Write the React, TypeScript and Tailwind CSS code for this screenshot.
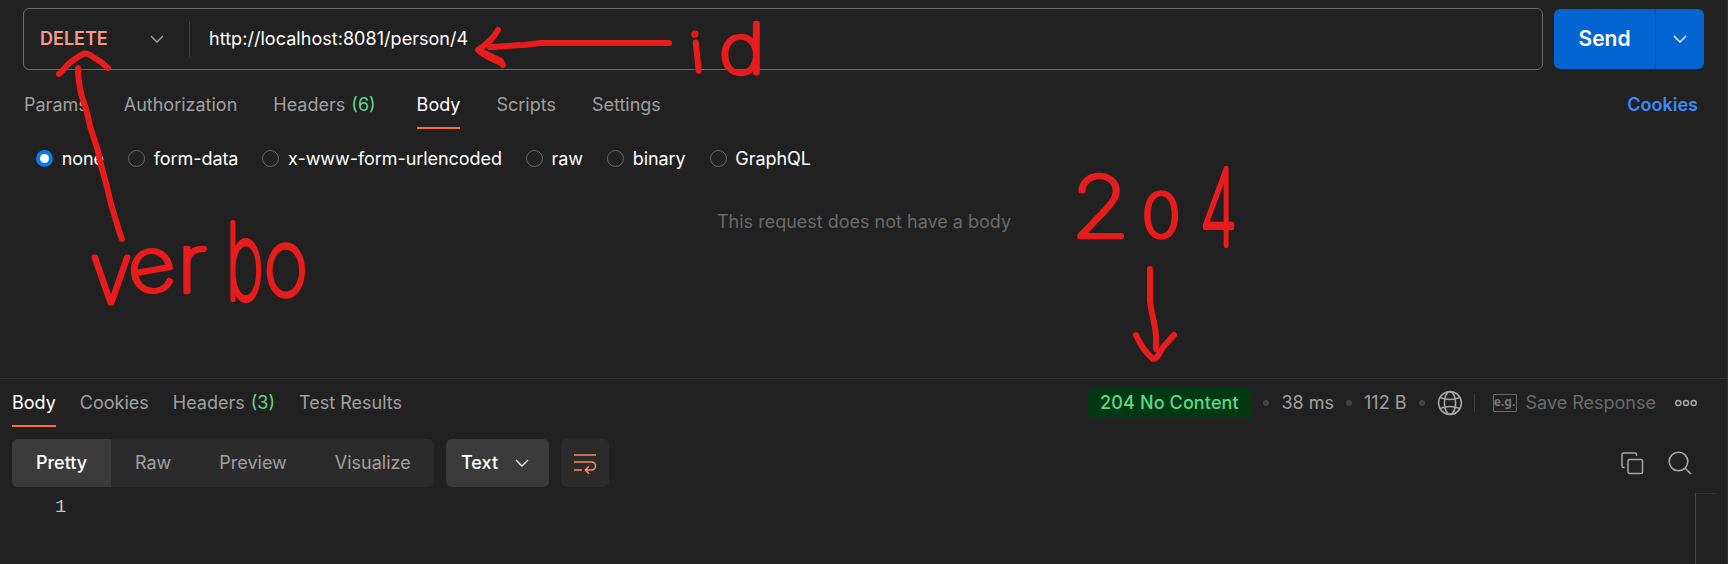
import type { ReactNode } from 'react';

const Chevron = ({ className }: { className: string }) => (
  <svg width="14" height="9" viewBox="0 0 14 9" fill="none" stroke="currentColor" strokeWidth="1.4" className={className}>
    <path d="M1 1l6 6 6-6" />
  </svg>
);

const Tab = ({ active, children }: { active?: boolean; children: ReactNode }) => (
  <div className={active ? 'h-full border-b-2 border-[#ff6c37] text-white' : 'h-full text-[#a0a0a0]'}>{children}</div>
);

const Radio = ({ label, checked }: { label: string; checked?: boolean }) => (
  <label className="flex items-center gap-[8.7px]">
    {checked ? (
      <span className="flex size-[17px] items-center justify-center rounded-full bg-[#097bed]">
        <span className="size-[9px] rounded-full bg-white" />
      </span>
    ) : (
      <span className="size-[17px] rounded-full border border-[#6b6b6b]" />
    )}
    <span className="pt-px tracking-[-0.06px] text-white">{label}</span>
  </label>
);

const Dot = () => <span className="size-1.5 rounded-full bg-[#424242]" />;

type Mark = { ch: string; x: number; y: number; size: number; sx: number; rot?: number };

const marks: Mark[][] = [
  [
    { ch: 'v', x: 90, y: 303, size: 84, sx: 0.92 },
    { ch: 'e', x: 132, y: 295, size: 74, sx: 1.12, rot: -10 },
    { ch: 'r', x: 177, y: 292, size: 80, sx: 1.15 },
    { ch: 'b', x: 226, y: 299, size: 104, sx: 0.62 },
    { ch: 'o', x: 264, y: 295, size: 92, sx: 0.82 },
  ],
  [
    { ch: 'i', x: 693, y: 72, size: 54, sx: 1, rot: -6 },
    { ch: 'd', x: 719, y: 73, size: 68, sx: 1.16 },
  ],
  [
    { ch: '2', x: 1071, y: 237, size: 84, sx: 1.13 },
    { ch: '0', x: 1142, y: 237, size: 60, sx: 1.08 },
    { ch: '4', x: 1200, y: 245, size: 104, sx: 0.6 },
  ],
];

const Annotations = () => (
  <svg
    width="1728"
    height="564"
    viewBox="0 0 1728 564"
    className="pointer-events-none absolute left-0 top-0"
    fill="none"
    stroke="#e81c1c"
    strokeWidth="6"
    strokeLinecap="round"
    strokeLinejoin="round"
  >
    <path d="M59 74C64 70 67 64 72 61L81 55Q85 52 90 55L101 62L108 68" />
    <path d="M78 68C78 78 79 86 82 97C86 107 88 116 90 126L98 151C100 164 105 178 108 191C111 207 116 219 119 231L122 239" />
    <path d="M498 30C494 38 488 43 478 50L501 61L503 65M478 50Q484 56 501 63M490 47C502 47 512 45 524 45L540 43H669" />
    <path d="M1150 269V300C1151 314 1155 322 1156 336V349M1136 335C1140 344 1146 353 1153 359C1158 359 1160 351 1164 346L1174 335" />
    {marks.map((word, i) => (
      <g key={i} fill="#e81c1c" strokeWidth="4.8" className="font-[Inter,sans-serif] font-thin">
        {word.map((m) => (
          <text
            key={m.ch}
            fontSize={m.size}
            vectorEffect="non-scaling-stroke"
            transform={`translate(${m.x} ${m.y}) rotate(${m.rot ?? 0}) scale(${m.sx} 1)`}
          >
            {m.ch}
          </text>
        ))}
      </g>
    ))}
  </svg>
);

export default function App() {
  return (
    <div className="relative flex h-[564px] w-[1728px] flex-col overflow-hidden border-r border-[#2e2e2e] bg-[#212121] font-[Inter,sans-serif] text-[18px] leading-6">
      <div className="ml-[23px] mt-2 flex h-[62px] shrink-0 items-center">
        <div className="flex h-[62px] w-[1520px] items-center rounded-md border border-[#6b6b6b]">
          <span className="ml-4 w-[110px] font-semibold text-[#f79a8e]">DELETE</span>
          <Chevron className="text-[#a6a6a6]" />
          <span className="ml-[25px] h-9 w-px bg-[#3d3d3d]" />
          <span className="ml-[19px] tracking-[0.04px] text-white">http://localhost:8081/person/4</span>
        </div>
        <div className="ml-[11px] flex h-[60px] w-[150px] items-center overflow-hidden rounded-md bg-[#0265d2] text-white">
          <span className="w-[101px] text-center text-[21px] font-semibold">Send</span>
          <span className="h-full w-px bg-[#0150a8]" />
          <Chevron className="ml-[17px]" />
        </div>
      </div>

      <div className="ml-6 mt-[23px] flex h-9 w-[1674px] shrink-0 gap-9">
        <Tab>Params</Tab>
        <Tab>Authorization</Tab>
        <div className="mr-[5px] flex h-full">
          <Tab>
            Headers <span className="ml-px text-[#5fd88a]">(6)</span>
          </Tab>
        </div>
        <Tab active>Body</Tab>
        <Tab>Scripts</Tab>
        <Tab>Settings</Tab>
        <span className="ml-auto font-semibold text-[#3d8bf5]">Cookies</span>
      </div>

      <div className="ml-9 mt-[17px] flex h-6 shrink-0 items-center gap-6">
        <Radio label="none" checked />
        <Radio label="form-data" />
        <Radio label="x-www-form-urlencoded" />
        <Radio label="raw" />
        <Radio label="binary" />
        <Radio label="GraphQL" />
      </div>

      <div className="mt-10 h-6 shrink-0 pl-px text-center text-[#6b6b6b]">This request does not have a body</div>

      <div className="mt-36 flex h-[49px] shrink-0 items-start border-t border-[#333333] pl-3">
        <div className="mt-3 flex h-9 gap-6">
          <Tab active>Body</Tab>
          <Tab>Cookies</Tab>
          <Tab>
            Headers <span className="ml-px text-[#5fd88a]">(3)</span>
          </Tab>
          <Tab>Test Results</Tab>
        </div>
        <div className="ml-auto mr-[30px] mt-[9px] flex h-[30px] items-center text-[#a0a0a0]">
          <span className="flex h-[30px] w-[164px] items-center justify-center rounded-md bg-[#003814] pr-0.5 font-medium tracking-[0.12px] text-[#5fd88a]">
            204 No Content
          </span>
          <span className="ml-[11px] flex items-center gap-3">
            <Dot />
            <span>38 ms</span>
            <Dot />
            <span>112 B</span>
            <Dot />
          </span>
          <svg width="26" height="26" viewBox="0 0 26 26" fill="none" stroke="#a6a6a6" strokeWidth="1.6" className="ml-3">
            <circle cx="13" cy="13" r="11.4" />
            <ellipse cx="13" cy="13" rx="5.6" ry="11.4" />
            <path d="M3 7.5Q13 11.5 23 7.5M3 18.5Q13 14.5 23 18.5" />
          </svg>
          <span className="ml-[11px] h-[18px] w-px bg-[#3d3d3d]" />
          <span className="ml-[18px] flex h-[18px] w-6 items-center justify-center rounded-[1px] border border-[#6b6b6b] pb-[3px] font-['Noto_Sans',sans-serif] text-[12px] font-bold leading-none text-[#777777]">
            e.g.
          </span>
          <span className="ml-[9px] text-[#6b6b6b]">Save Response</span>
          <svg width="22" height="8" viewBox="0 0 22 8" fill="none" stroke="#a6a6a6" strokeWidth="1.6" className="ml-[19px]">
            <circle cx="3.3" cy="4" r="2.5" />
            <circle cx="11" cy="4" r="2.5" />
            <circle cx="18.7" cy="4" r="2.5" />
          </svg>
        </div>
      </div>

      <div className="ml-3 mt-3 flex h-12 shrink-0 items-center">
        <div className="flex h-12 w-[422px] items-center overflow-hidden rounded-md bg-[#2b2b2b] text-[#a0a0a0]">
          <span className="flex h-full w-[99px] items-center justify-center bg-[#3b3b3b] font-medium text-white">Pretty</span>
          <span className="ml-6">Raw</span>
          <span className="ml-12">Preview</span>
          <span className="ml-12">Visualize</span>
        </div>
        <div className="ml-3 flex h-12 w-[103px] items-center rounded-md bg-[#3b3b3b] pl-[15px] font-medium text-white">
          <span className="w-[54px]">Text</span>
          <Chevron className="text-white" />
        </div>
        <div className="ml-3 flex size-12 items-center justify-center rounded-md bg-[#2b2b2b]">
          <svg width="24" height="24" viewBox="0 0 24 24" fill="none" stroke="#ff8a5c" strokeWidth="1.6">
            <path d="M1 4h22M1 11h17.5a4 4 0 0 1 0 8H13M1 19h8M16 15.3L12.3 19l3.7 3.7" />
          </svg>
        </div>
        <svg width="24" height="24" viewBox="0 0 24 24" fill="none" stroke="#a6a6a6" strokeWidth="1.5" className="ml-[1011px]">
          <path d="M4.5 16.5H3.5a1.5 1.5 0 0 1-1.5-1.5V3.5a1.5 1.5 0 0 1 1.5-1.5H15a1.5 1.5 0 0 1 1.5 1.5V5" />
          <rect x="8" y="8.5" width="14.5" height="14" rx="1.5" />
        </svg>
        <svg width="24" height="24" viewBox="0 0 24 24" fill="none" stroke="#a6a6a6" strokeWidth="1.6" className="ml-6">
          <circle cx="10.5" cy="10.5" r="9.3" />
          <path d="M17 17l6 6" />
        </svg>
      </div>

      <div className="mt-1.5 flex h-[71px] justify-between font-['Liberation_Mono',monospace] text-[#c4c4c4]">
        <span className="ml-[55px] mt-0.5 text-[19px]">1</span>
        <div className="mr-[11px] w-[21px] border-l border-t border-l-[#4a4a4a] border-t-[#333333]" />
      </div>

      <Annotations />
    </div>
  );
}
